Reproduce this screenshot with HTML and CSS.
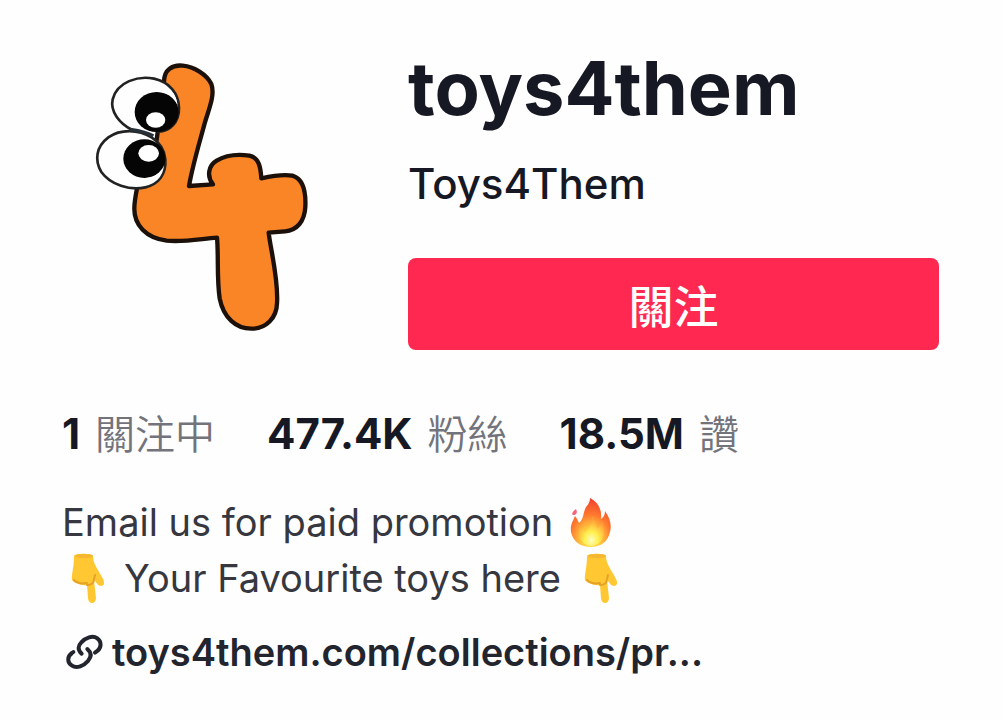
FILE: index.html
```html
<!DOCTYPE html>
<html lang="zh-Hant">
<head>
    <meta charset="UTF-8">
    <meta name="viewport" content="width=device-width, initial-scale=1.0">
    <title>toys4them</title>
    <link rel="stylesheet" href="styles.css">
</head>
<body>
    <main class="profile">
        <!-- Avatar, name and follow button -->
        <header class="profile-header">
            <svg class="avatar" viewBox="6 0 930 930" role="img" aria-label="Toys4Them">
                <path class="body" d="M312 125C312 88 338 74 368 77C402 80 440 103 454 132C466 165 446 208 434 250C418 310 398 375 387 438L459 433C439 408 446 376 470 362C500 344 540 343 568 347C598 353 602 384 604 415C640 407 670 402 697 407C728 416 738 455 736 500C734 545 710 571 675 574L626 578C632 630 656 720 651 790C650 835 617 865 578 866C528 868 490 832 479 775C470 715 476 650 471 593C420 597 370 607 320 602C258 594 222 555 223 505C223 485 227 465 232 440L290 300Z"/>
                <path class="eye" d="M216 270C178 250 150 215 158 178C171 125 235 106 282 116C328 126 356 160 357 203C358 246 329 278 290 275"/>
                <ellipse class="pupil" cx="290" cy="216" rx="66" ry="60"/>
                <ellipse class="glint" cx="287" cy="240" rx="29" ry="23"/>
                <path class="shine" d="M296 134C330 138 350 165 352 192C340 172 322 158 300 155Z"/>
                <path class="eye" d="M275 292C235 267 180 267 145 292C108 320 103 360 124 396C151 434 210 453 256 442C296 432 319 403 316 358C314 330 298 307 275 292Z"/>
                <ellipse class="pupil" cx="253" cy="356" rx="63" ry="58"/>
                <ellipse class="glint" cx="266" cy="340" rx="31" ry="25"/>
                <path class="shine" d="M262 413C281 413 297 403 306 388C303 412 280 431 258 435Z"/>
                <path class="lid" d="M208 268C235 272 258 275 280 288"/>
            </svg>
            <div class="profile-info">
                <h1>toys4them</h1>
                <h2>Toys4Them</h2>
                <button type="button" class="follow">關注</button>
            </div>
        </header>

        <!-- Counts -->
        <ul class="stats">
            <li><strong>1</strong><span>關注中</span></li>
            <li><strong>477.4K</strong><span>粉絲</span></li>
            <li><strong>18.5M</strong><span>讚</span></li>
        </ul>

        <!-- Bio -->
        <div class="bio">
            <p>
                <span>Email us for paid promotion</span>
                <svg class="emoji" viewBox="0 0 48 52" aria-hidden="true">
                    <defs>
                        <radialGradient id="flame" cx="0.5" cy="0.85" r="0.85">
                            <stop offset="0" stop-color="#fff36b"/>
                            <stop offset="0.3" stop-color="#ffc83d"/>
                            <stop offset="0.6" stop-color="#ff7a2f"/>
                            <stop offset="1" stop-color="#ee3e2c"/>
                        </radialGradient>
                        <radialGradient id="core" cx="0.5" cy="0.8" r="0.7">
                            <stop offset="0" stop-color="#fffbc0"/>
                            <stop offset="0.4" stop-color="#fff04e"/>
                            <stop offset="1" stop-color="#ff9a35"/>
                        </radialGradient>
                    </defs>
                    <path fill="url(#flame)" d="M23 2C31 6 35 13 34 23C37 21 38 18 38 15C43 22 45 29 43 36C41 46 33 51 24 51C13 51 6 45 4 36C3 29 6 25 8 20C10 22 11 25 12 27C17 23 16 16 19 11C22 8 23 5 23 2Z"/>
                    <path fill="url(#core)" d="M25 20C29 25 28 29 30 33C33 31 34 29 35 26C39 36 37 48 25 50C13 49 10 39 13 30C15 33 17 35 18 36C22 32 26 27 25 20Z"/>
                    <path fill="#f4647a" d="M9 13C11 17 9 19 6 19C4 18 6 15 9 13Z"/>
                </svg>
            </p>
            <p>
                <svg class="emoji" viewBox="0 0 48 52" aria-hidden="true">
                    <path fill="#ffc832" d="M12 4C12 1 31 1 31 4C31 12 36 17 41 27C43 31 42 34 39 34C36 34 34 30 32 28L34 46C34 49 32 51 30 51C28 51 26 49 26 46L25 33C20 34 12 31 10 28C9 24 12 16 12 4Z"/>
                    <path fill="none" stroke="#e5a227" stroke-width="2" stroke-linecap="round" d="M25 33C29 33 32 31 32 27L33 23M12 28C15 31 20 32 25 31"/>
                    <ellipse fill="#f4b72f" cx="22" cy="4" rx="9" ry="2"/>
                </svg>
                <span>Your Favourite toys here</span>
                <svg class="emoji" viewBox="0 0 48 52" aria-hidden="true">
                    <path fill="#ffc832" d="M12 4C12 1 31 1 31 4C31 12 36 17 41 27C43 31 42 34 39 34C36 34 34 30 32 28L34 46C34 49 32 51 30 51C28 51 26 49 26 46L25 33C20 34 12 31 10 28C9 24 12 16 12 4Z"/>
                    <path fill="none" stroke="#e5a227" stroke-width="2" stroke-linecap="round" d="M25 33C29 33 32 31 32 27L33 23M12 28C15 31 20 32 25 31"/>
                    <ellipse fill="#f4b72f" cx="22" cy="4" rx="9" ry="2"/>
                </svg>
            </p>
        </div>

        <a class="site-link" href="#">
            <svg class="link-icon" viewBox="6 22 150 126" aria-hidden="true">
                <path d="M65 90C52 78 54 66 64 56C76 42 98 34 112 44C126 54 124 72 112 82L105 87"/>
                <path d="M82 76C96 88 94 100 84 112C72 126 50 136 36 126C20 116 22 98 36 88L40 85"/>
            </svg>
            <span>toys4them.com/collections/pr...</span>
        </a>
    </main>
</body>
</html>
```

FILE: styles.css
```css
body {
    margin: 0;
    background-color: #fefefe;
    color: #161823; /* Near black */
    font-family: Inter, "Noto Sans CJK TC", sans-serif;
}
h1, h2, p, ul {
    margin: 0;
    padding: 0;
}
.profile {
    padding: 40px 64px 40px 62px;
}
.profile-header {
    display: flex;
    gap: 36px;
}
.avatar {
    width: 310px;
    height: 310px;
    flex: none;
}
.avatar .body {
    fill: #fa8526; /* Orange */
    stroke: #1c100b;
    stroke-width: 13;
    stroke-linejoin: round;
}
.avatar .eye {
    fill: #fefefe;
    stroke: #222222;
    stroke-width: 8;
}
.avatar .pupil {
    fill: #050505;
}
.avatar .glint,
.avatar .shine {
    fill: #ffffff;
}
.avatar .lid {
    fill: none;
    stroke: #263036;
    stroke-width: 10;
}
.profile-info {
    flex: 1;
    min-width: 0;
}
h1 {
    font-size: 74px;
    font-weight: 700;
    line-height: 96px;
}
h2 {
    margin-top: 20px;
    font-size: 42px;
    font-weight: 500;
    line-height: 56px;
}
.follow {
    display: block;
    width: 100%;
    height: 92px;
    margin-top: 46px;
    padding: 0;
    border: none;
    border-radius: 8px;
    background-color: #fe2850; /* Pinkish red */
    color: #ffffff;
    font-family: "Noto Sans CJK TC", sans-serif;
    font-size: 45px;
    font-weight: 500;
    cursor: pointer;
}
.stats {
    display: flex;
    gap: 52px;
    margin-top: 56px;
    list-style: none;
}
.stats li {
    display: flex;
    align-items: baseline;
    gap: 15px;
    line-height: 56px;
}
.stats strong {
    font-size: 42px;
    font-weight: 700;
}
.stats span {
    color: #73747b; /* Gray */
    font-size: 40px;
    font-weight: 350;
}
.bio {
    margin-top: 31px;
    font-size: 38px;
}
.bio p {
    display: flex;
    align-items: center;
    gap: 14px;
    height: 56px;
    color: #36373f;
    white-space: nowrap;
}
.emoji {
    width: 48px;
    height: 52px;
    flex: none;
}
.site-link {
    display: flex;
    align-items: center;
    margin-top: 22px;
    color: #22242e;
    font-size: 38px;
    font-weight: 600;
    line-height: 48px;
    text-decoration: none;
    white-space: nowrap;
}
.link-icon {
    width: 50px;
    height: 42px;
    flex: none;
    fill: none;
    stroke: #22242e;
    stroke-width: 12;
    stroke-linecap: round;
}
```
